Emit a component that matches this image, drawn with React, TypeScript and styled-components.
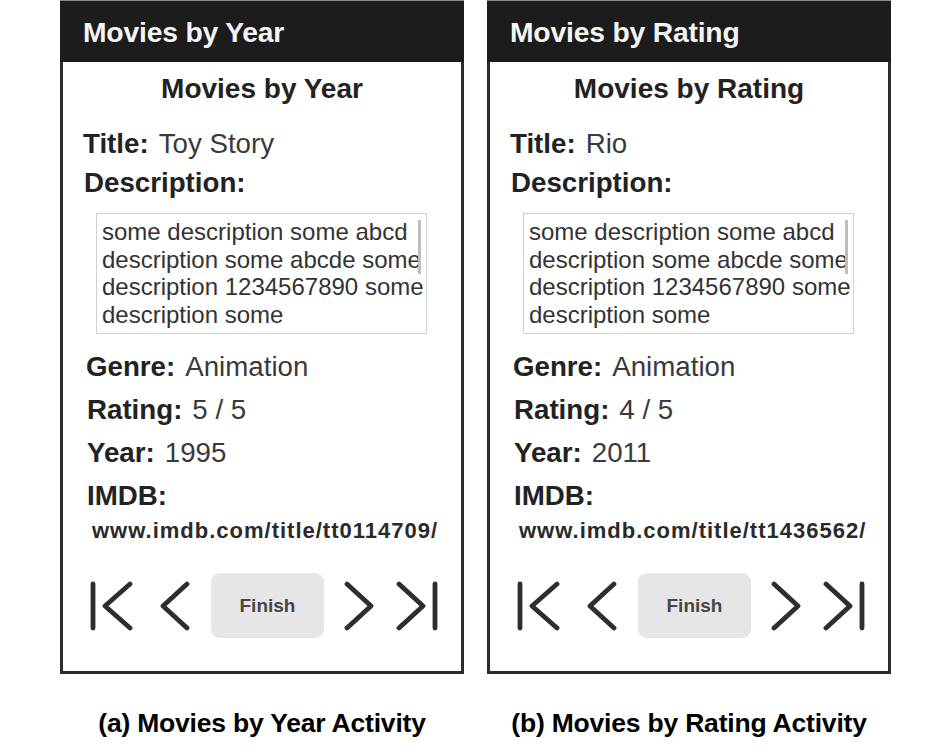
import React from "react";
import styled, { createGlobalStyle } from "styled-components";

const GlobalStyle = createGlobalStyle`
  html, body { margin: 0; padding: 0; background: #ffffff; }
  body { font-family: "Liberation Sans", Arial, Helvetica, sans-serif; }
`;

const Page = styled.div`
  display: flex;
  gap: 23px;
  padding-left: 60px;
  width: 935px;
  height: 752px;
  box-sizing: border-box;
`;

const Column = styled.div`
  display: flex;
  flex-direction: column;
  width: 404px;
`;

const Phone = styled.div`
  width: 404px;
  height: 674px;
  box-sizing: border-box;
  border: 3px solid #2c2c2c;
  border-top: none;
  background: #ffffff;
  display: flex;
  flex-direction: column;
`;

const TitleBar = styled.div`
  height: 62px;
  margin: 0 -3px;
  background: #1c1c1c;
  border-top: 1px solid #8a8a8a;
  box-sizing: border-box;
  padding: 16px 0 0 23px;
  color: #f4f4f4;
  font-weight: 700;
  font-size: 28.3px;
  line-height: 30px;
  letter-spacing: -0.2px;
`;

const Body = styled.div`
  display: flex;
  flex-direction: column;
  padding-top: 12px;
`;

const Heading = styled.div`
  text-align: center;
  font-weight: 700;
  font-size: 28px;
  line-height: 30px;
  color: #222;
  margin-bottom: 25px;
`;

const Row = styled.div<{ $indent: number; $gap: number }>`
  padding-left: ${(p) => p.$indent}px;
  font-size: 27.7px;
  line-height: 30px;
  color: #3a3a3a;
  margin-bottom: ${(p) => p.$gap}px;
  white-space: nowrap;
`;

const Label = styled.span`
  font-weight: 700;
  color: #222;
  margin-right: 10px;
`;

const DescBox = styled.div`
  margin-left: 33px;
  width: 331px;
  height: 121px;
  box-sizing: border-box;
  border: 1px solid #cfcfcf;
  padding: 4px 0 0 5px;
  font-size: 24px;
  line-height: 27.67px;
  color: #333;
  position: relative;
  margin-bottom: 18px;
  white-space: nowrap;
`;

const ScrollThumb = styled.div`
  position: absolute;
  right: 5px;
  top: 6px;
  width: 3px;
  height: 54px;
  background: #bdbdbd;
`;

const Url = styled.div`
  padding-left: 29px;
  font-weight: 700;
  font-size: 22px;
  line-height: 26px;
  letter-spacing: 1px;
  color: #2a2a2a;
  margin-top: 7px;
  white-space: nowrap;
`;

const NavRow = styled.div`
  display: flex;
  align-items: center;
  gap: 20px;
  padding-left: 27px;
  margin-top: 29px;
`;

const NavIcon = styled.svg`
  display: block;
  flex: none;
  stroke: #2e2e2e;
  stroke-width: 4.8;
  stroke-linecap: round;
  stroke-linejoin: round;
  fill: none;
`;

const FinishButton = styled.button`
  width: 113px;
  height: 65px;
  border: none;
  border-radius: 9px;
  background: #e6e6e6;
  font-family: "Liberation Sans", Arial, sans-serif;
  font-weight: 700;
  font-size: 19px;
  color: #474747;
  padding: 0;
  flex: none;
`;

const Caption = styled.div`
  margin-top: 34px;
  text-align: center;
  font-weight: 700;
  font-size: 26.5px;
  line-height: 30px;
  color: #000;
  letter-spacing: -0.2px;
`;

type Movie = {
  app: string;
  title: string;
  rating: string;
  year: string;
  url: string;
  caption: string;
};

const movies: Movie[] = [
  {
    app: "Movies by Year",
    title: "Toy Story",
    rating: "5 / 5",
    year: "1995",
    url: "www.imdb.com/title/tt0114709/",
    caption: "(a) Movies by Year Activity",
  },
  {
    app: "Movies by Rating",
    title: "Rio",
    rating: "4 / 5",
    year: "2011",
    url: "www.imdb.com/title/tt1436562/",
    caption: "(b) Movies by Rating Activity",
  },
];

const FirstIcon = () => (
  <NavIcon width="49" height="50" viewBox="0 0 49 50">
    <line x1="3" y1="3" x2="3" y2="47" />
    <polyline points="40,3 15,25 40,47" />
  </NavIcon>
);

const PrevIcon = () => (
  <NavIcon width="32" height="50" viewBox="0 0 32 50">
    <polyline points="28,3 4,25 28,47" />
  </NavIcon>
);

const NextIcon = () => (
  <NavIcon width="32" height="50" viewBox="0 0 32 50">
    <polyline points="3,3 27,25 3,47" />
  </NavIcon>
);

const LastIcon = () => (
  <NavIcon width="42" height="50" viewBox="0 0 42 50">
    <polyline points="3,3 27,25 3,47" />
    <line x1="39" y1="3" x2="39" y2="47" />
  </NavIcon>
);

const MovieScreen = ({ m }: { m: Movie }) => (
  <Column>
    <Phone>
      <TitleBar>{m.app}</TitleBar>
      <Body>
        <Heading>{m.app}</Heading>
        <Row $indent={20} $gap={9}>
          <Label>Title:</Label>
          {m.title}
        </Row>
        <Row $indent={21} $gap={15}>
          <Label>Description:</Label>
        </Row>
        <DescBox>
          some description some abcd
          <br />
          description some abcde some
          <br />
          description 1234567890 some
          <br />
          description some
          <ScrollThumb />
        </DescBox>
        <Row $indent={23} $gap={13}>
          <Label>Genre:</Label>
          Animation
        </Row>
        <Row $indent={24} $gap={13}>
          <Label>Rating:</Label>
          {m.rating}
        </Row>
        <Row $indent={24} $gap={13}>
          <Label>Year:</Label>
          {m.year}
        </Row>
        <Row $indent={24} $gap={0}>
          <Label>IMDB:</Label>
        </Row>
        <Url>{m.url}</Url>
        <NavRow>
          <FirstIcon />
          <PrevIcon />
          <FinishButton>Finish</FinishButton>
          <NextIcon />
          <LastIcon />
        </NavRow>
      </Body>
    </Phone>
    <Caption>{m.caption}</Caption>
  </Column>
);

export default function App() {
  return (
    <>
      <GlobalStyle />
      <Page>
        {movies.map((m) => (
          <MovieScreen key={m.app} m={m} />
        ))}
      </Page>
    </>
  );
}
